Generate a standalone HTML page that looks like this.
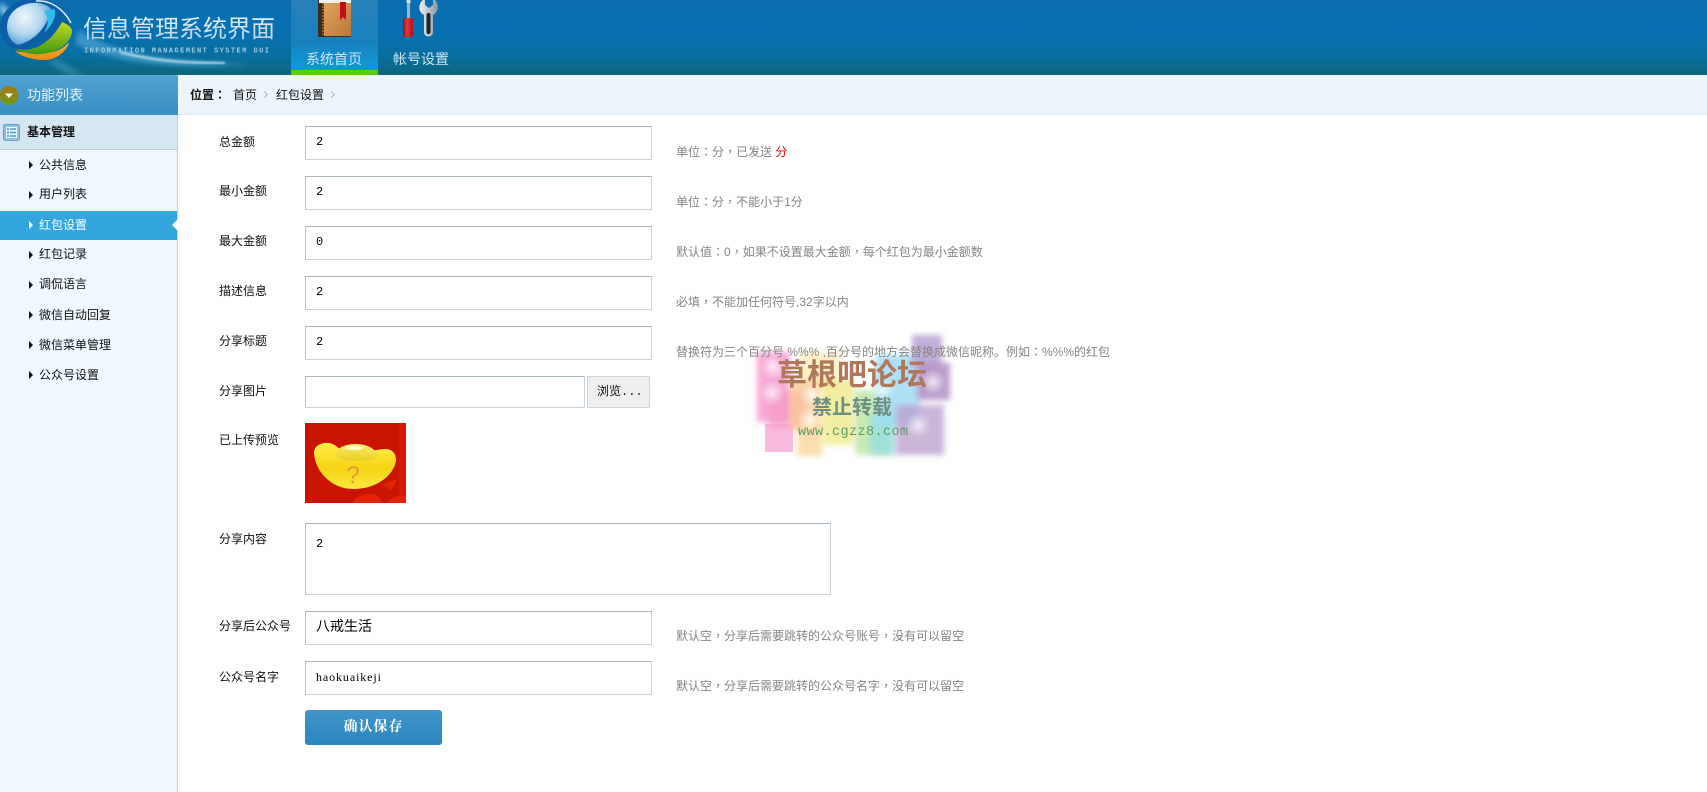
<!DOCTYPE html>
<html lang="zh-CN">
<head>
<meta charset="utf-8">
<title>信息管理系统界面</title>
<style>
*{box-sizing:border-box;margin:0;padding:0}
html,body{width:1707px;height:792px;overflow:hidden;background:#fff}
body{position:relative;font:12px/16px "Liberation Sans","WenQuanYi Zen Hei","Noto Sans CJK SC",sans-serif;color:#111}
.a{position:absolute;white-space:nowrap}
svg{position:absolute;display:block}
i.p{font-style:normal;font-family:"Noto Sans CJK TC",sans-serif}
#hd{left:0;top:0;width:1707px;height:75px;background:linear-gradient(#0a6eb0 0,#0770b2 45%,#086f9f 75%,#0b6678 100%)}
#tab{left:291px;top:0;width:87px;height:75px;background:linear-gradient(#2a80b8,#1681bd 60%,#0f97d4 92%);border-bottom:5px solid #5bce00}
.nav{font-size:14px;line-height:18px;color:#cfe6f2;top:50px}
#side{left:0;top:75px;width:178px;height:717px;background:#f0f9ff;border-right:1px solid #bcd5e3}
#fl{left:0;top:75px;width:178px;height:40px;background:linear-gradient(#4fa2d2,#3a8fc2);border-top:1px solid #62acd8}
#jb{left:0;top:115px;width:177px;height:35px;background:#d3e6f1;border-bottom:1px solid #b7cfdc}
.it{left:39px;line-height:16px}
.ar{width:0;height:0;border-left:4px solid #111;border-top:4px solid transparent;border-bottom:4px solid transparent;left:29px}
#sel{left:0;top:211px;width:177px;height:29px;background:#33a7dd}
#bc{left:178px;top:75px;width:1529px;height:40px;background:#ecf5fb;border-bottom:1px solid #dde8ee}
.chev{width:5px;height:5px;border-top:1.5px solid #a9b8c0;border-right:1.5px solid #a9b8c0;transform:rotate(45deg);top:92px}
.lb{left:219px}
.in{left:305px;width:347px;height:34px;border:1px solid #c8d4dc;border-top-color:#a7b5bf;border-left-color:#b2c0c9;background:#fff;font:12px/31px "Liberation Mono","WenQuanYi Zen Hei",monospace;padding-left:10px;color:#000}
.hn{left:676px;color:#858585}
#btn{left:305px;top:710px;width:137px;height:35px;border-radius:3px;background:linear-gradient(#4095c8,#2986bf);color:#fff;font:bold 14px/35px "Liberation Serif","Noto Serif CJK SC",serif;text-align:center;letter-spacing:1px}
.sq{position:absolute;filter:blur(3px)}
.gl{position:absolute;width:26px;height:26px;border-radius:50%;background:radial-gradient(rgba(255,255,255,.75) 0,rgba(255,255,255,.35) 35%,rgba(255,255,255,0) 72%)}
</style>
</head>
<body>
<div class="a" id="hd"></div>
<!-- header swoosh -->
<svg style="left:0;top:0" width="291" height="75" viewBox="0 0 291 75">
<defs>
<filter id="b3"><feGaussianBlur stdDeviation="2.5"/></filter>
<filter id="b1"><feGaussianBlur stdDeviation="1"/></filter>
<radialGradient id="glo" cx="40%" cy="35%" r="70%"><stop offset="0" stop-color="#eef6fb"/><stop offset=".55" stop-color="#b5d7ee"/><stop offset="1" stop-color="#4a9bd3"/></radialGradient>
<linearGradient id="grn" x1="0" y1="0" x2="0" y2="1"><stop offset="0" stop-color="#c4d81e"/><stop offset="1" stop-color="#3f9a14"/></linearGradient>
<linearGradient id="org" x1="0" y1="0" x2="0" y2="1"><stop offset="0" stop-color="#f4b42a"/><stop offset="1" stop-color="#f08a10"/></linearGradient>
<linearGradient id="ttl" x1="0" y1="0" x2="0" y2="1"><stop offset="0" stop-color="#f6fbfe"/><stop offset="1" stop-color="#a9cfe3"/></linearGradient>
</defs>
<path d="M78 30C120 55 170 62 250 64C190 70 120 66 75 44Z" fill="#5fb4dc" opacity=".55" filter="url(#b3)"/>
<path d="M120 52C150 60 180 63 225 63" stroke="#e6f6fc" stroke-width="2" fill="none" opacity=".85" filter="url(#b1)"/>
<path d="M58 60L85 75H68L48 62Z" fill="#4fa5cc" opacity=".45" filter="url(#b3)"/>
<path d="M0 2L22 20L0 14Z" fill="#bfe3f5" opacity=".65" filter="url(#b3)"/>
<ellipse cx="35" cy="27" rx="35" ry="29" fill="#0c5fa6"/>
<path d="M68 43C60 53 42 56 15 51C22 57 34 60 44 60C56 60 66 52 69 43Z" fill="url(#org)"/>
<path d="M14 48C32 54 50 44 62 22C67 24 72 27 72 31C72 41 60 52 42 54C30 55 20 52 14 48Z" fill="url(#grn)"/>
<path d="M7 27C7 11 22 2 38 3C44 4 49 6 51 9C49 22 38 40 18 45C11 42 7 35 7 27Z" fill="url(#glo)"/>
<path d="M44 11L54 9C58 14 52 26 44 33C49 24 49 18 44 11Z" fill="#2ebce8"/>
<path d="M36 1C50 0 63 8 71 23" stroke="#dbeef8" stroke-width="1.5" fill="none"/>
<text x="83" y="37" font-family="'Noto Sans CJK SC','WenQuanYi Zen Hei',sans-serif" font-size="24" fill="url(#ttl)">信息管理系统界面</text>
<text x="84" y="52.500" font-family="'Liberation Mono',monospace" font-size="7" font-weight="bold" fill="#9cc9e0" textLength="185" lengthAdjust="spacing">INFORMATION MANAGEMENT SYSTEM GUI</text>
</svg>
<div class="a" id="tab"></div>
<!-- book icon -->
<svg style="left:318px;top:0" width="34" height="38" viewBox="0 0 34 38">
<defs><linearGradient id="bk" x1="0" y1="0" x2="1" y2="1"><stop offset="0" stop-color="#e0a45c"/><stop offset="1" stop-color="#b9773a"/></linearGradient></defs>
<rect x="0" y="0" width="33" height="37" rx="1" fill="#3a2c20"/>
<rect x="6" y="2" width="27" height="34" fill="url(#bk)"/>
<rect x="1" y="0" width="32" height="3" fill="#f4f1e8"/>
<path d="M5 3V36" stroke="#d98b2c" stroke-width="1" stroke-dasharray="2 1"/>
<path d="M22 2H28V20L25 17L22 20Z" fill="#c00f1b"/>
</svg>
<!-- tools icon -->
<svg style="left:402px;top:0" width="36" height="38" viewBox="0 0 36 38">
<defs><linearGradient id="rd" x1="0" y1="0" x2="1" y2="0"><stop offset="0" stop-color="#8e1015"/><stop offset=".4" stop-color="#e8383c"/><stop offset="1" stop-color="#a81418"/></linearGradient>
<linearGradient id="st" x1="0" y1="0" x2="1" y2="0"><stop offset="0" stop-color="#eef3f5"/><stop offset="1" stop-color="#8a979e"/></linearGradient></defs>
<rect x="5" y="0" width="3" height="18" fill="#aab4b8"/>
<rect x="4.500" y="0" width="4" height="3" fill="#d8dee0"/>
<rect x="1" y="18" width="10" height="19" rx="2" fill="url(#rd)"/>
<path d="M21 0C16 4 16 12 22 15V32C22 38 31 38 31 32V15C37 12 37 4 33 0L31 0V5L27 8L23 5V0Z" fill="url(#st)"/>
<rect x="24.500" y="13" width="4" height="21" rx="2" fill="#1c2226"/>
</svg>
<div class="a nav" style="left:306px">系统首页</div>
<div class="a nav" style="left:393px">帐号设置</div>

<div class="a" id="side"></div>
<div class="a" id="fl"></div>
<svg style="left:0;top:85px" width="20" height="22" viewBox="0 0 20 22">
<defs><linearGradient id="ol" x1="0" y1="0" x2="0" y2="1"><stop offset="0" stop-color="#a67a12"/><stop offset="1" stop-color="#6f9a1a"/></linearGradient></defs>
<circle cx="9" cy="10.500" r="9.500" fill="url(#ol)"/><path d="M5 8.500H13L9 13Z" fill="#fff"/>
</svg>
<div class="a" style="left:27px;top:86px;font-size:14px;line-height:18px;color:#e4f3fb">功能列表</div>
<div class="a" id="jb"></div>
<svg style="left:3px;top:124px" width="17" height="17" viewBox="0 0 17 17">
<rect x=".5" y=".5" width="16" height="16" rx="2" fill="#8fc0dc" stroke="#62a4cc"/>
<rect x="3" y="3" width="11" height="11" fill="#e8f4fb"/>
<path d="M4 5H6M7 5H13M4 8.500H6M7 8.500H13M4 12H6M7 12H13" stroke="#4a95c4" stroke-width="1.500"/>
</svg>
<div class="a" style="left:27px;top:124px;font-weight:bold">基本管理</div>
<div class="a" id="sel"></div>
<div class="a" style="left:172px;top:219px;width:0;height:0;border-right:6px solid #fff;border-top:6px solid transparent;border-bottom:6px solid transparent"></div>

<div class="a ar" style="top:161px"></div><div class="a it" style="top:157px">公共信息</div>
<div class="a ar" style="top:191px"></div><div class="a it" style="top:186px">用户列表</div>
<div class="a ar" style="top:221px;border-left-color:#fff"></div><div class="a it" style="top:217px;color:#fff">红包设置</div>
<div class="a ar" style="top:251px"></div><div class="a it" style="top:246px">红包记录</div>
<div class="a ar" style="top:281px"></div><div class="a it" style="top:276px">调侃语言</div>
<div class="a ar" style="top:311px"></div><div class="a it" style="top:307px">微信自动回复</div>
<div class="a ar" style="top:341px"></div><div class="a it" style="top:337px">微信菜单管理</div>
<div class="a ar" style="top:371px"></div><div class="a it" style="top:367px">公众号设置</div>

<div class="a" id="bc"></div>
<div class="a" style="left:190px;top:87px;font-weight:bold">位置<i class="p" lang="zh-Hant">：</i></div>
<div class="a" style="left:233px;top:87px">首页</div>
<div class="a chev" style="left:262px"></div>
<div class="a" style="left:276px;top:87px">红包设置</div>
<div class="a chev" style="left:329px"></div>

<!-- watermark -->
<div class="a" style="left:750px;top:330px;width:210px;height:130px">
<div class="sq" style="left:7px;top:22px;width:33px;height:70px;background:#f48dca;opacity:.75"></div>
<div class="sq" style="left:15px;top:94px;width:28px;height:28px;background:#f7a9d8;opacity:.8;filter:none"></div>
<div class="sq" style="left:18px;top:62px;width:38px;height:36px;background:#f59ac5;opacity:.75"></div>
<div class="sq" style="left:50px;top:22px;width:40px;height:36px;background:#fbe9b0;opacity:.7"></div>
<div class="sq" style="left:40px;top:50px;width:32px;height:50px;background:#fac992;opacity:.8"></div>
<div class="sq" style="left:47px;top:94px;width:25px;height:32px;background:#fbd79f;opacity:.85"></div>
<div class="sq" style="left:72px;top:50px;width:32px;height:65px;background:#ede784;opacity:.75"></div>
<div class="sq" style="left:105px;top:60px;width:36px;height:65px;background:#b7e39a;opacity:.75"></div>
<div class="sq" style="left:120px;top:85px;width:26px;height:40px;background:#8fdde8;opacity:.7"></div>
<div class="sq" style="left:125px;top:25px;width:45px;height:70px;background:#9fdcf7;opacity:.85"></div>
<div class="sq" style="left:146px;top:75px;width:48px;height:50px;background:#b99ccc;opacity:.75"></div>
<div class="sq" style="left:162px;top:5px;width:30px;height:34px;background:#bba6d6;opacity:.9"></div>
<div class="sq" style="left:167px;top:33px;width:33px;height:37px;background:#b393c9;opacity:.9"></div>
<div class="gl" style="left:10px;top:24px"></div>
<div class="gl" style="left:9px;top:50px"></div>
<div class="gl" style="left:49px;top:52px"></div>
<div class="gl" style="left:47px;top:77px"></div>
<div class="gl" style="left:119px;top:47px"></div>
<div class="gl" style="left:155px;top:82px"></div>
<div class="gl" style="left:170px;top:39px"></div>
</div>
<div class="a" style="left:777px;top:352px;font:bold 30px/40px 'Noto Sans CJK SC',sans-serif;color:#b0775a">草根吧论坛</div>
<div class="a" style="left:812px;top:392px;font:bold 20px/28px 'Noto Sans CJK SC',sans-serif;color:#6f8f7e">禁止转载</div>
<div class="a" style="left:798px;top:424px;font:13.500px/18px 'Liberation Mono',monospace;color:#619a68;letter-spacing:.4px">www.cgzz8.com</div>

<!-- form -->
<div class="a lb" style="top:134px">总金额</div>
<div class="a in" style="top:126px">2</div>
<div class="a hn" style="top:144px">单位<i class="p" lang="zh-Hant">：</i>分<i class="p" lang="zh-Hant">，</i>已发送 <span style="color:#e8000a">分</span></div>
<div class="a lb" style="top:183px">最小金额</div>
<div class="a in" style="top:176px">2</div>
<div class="a hn" style="top:194px">单位<i class="p" lang="zh-Hant">：</i>分<i class="p" lang="zh-Hant">，</i>不能小于1分</div>
<div class="a lb" style="top:233px">最大金额</div>
<div class="a in" style="top:226px">0</div>
<div class="a hn" style="top:244px">默认值<i class="p" lang="zh-Hant">：</i>0<i class="p" lang="zh-Hant">，</i>如果不设置最大金额<i class="p" lang="zh-Hant">，</i>每个红包为最小金额数</div>
<div class="a lb" style="top:283px">描述信息</div>
<div class="a in" style="top:276px">2</div>
<div class="a hn" style="top:294px">必填<i class="p" lang="zh-Hant">，</i>不能加任何符号,32字以内</div>
<div class="a lb" style="top:333px">分享标题</div>
<div class="a in" style="top:326px">2</div>
<div class="a hn" style="top:344px">替换符为三个百分号 %%% ,百分号的地方会替换成微信昵称。例如<i class="p" lang="zh-Hant">：</i>%%%的红包</div>
<div class="a lb" style="top:383px">分享图片</div>
<div class="a in" style="top:376px;width:280px;height:32px"></div>
<div class="a" style="left:587px;top:376px;width:63px;height:32px;background:#efefef;border:1px solid #c8d4dc;font:12px/31px 'Liberation Mono','WenQuanYi Zen Hei',monospace;padding-left:9px">浏览...</div>
<div class="a lb" style="top:432px">已上传预览</div>
<svg style="left:305px;top:423px" width="101" height="80" viewBox="0 0 101 80">
<defs>
<linearGradient id="au" x1="0" y1="0" x2="0" y2="1"><stop offset="0" stop-color="#fff04a"/><stop offset=".55" stop-color="#f5d412"/><stop offset="1" stop-color="#fbe840"/></linearGradient>
<linearGradient id="au2" x1="0" y1="0" x2="0" y2="1"><stop offset="0" stop-color="#f9ee70"/><stop offset="1" stop-color="#e8cf20"/></linearGradient>
</defs>
<rect width="101" height="80" fill="#c91400"/>
<rect x="94" width="7" height="80" fill="#d61900"/>
<path d="M9 30C9 23 16 19 24 20C30 21 32 24 36 27H64C70 28 74 26 80 26C87 26 91 30 91 37C90 50 74 66 48 66C26 66 10 48 9 30Z" fill="url(#au)"/>
<path d="M31 31C31 25 40 21 51 21C62 21 72 26 72 33C72 36 62 38 51 38C41 38 31 36 31 31Z" fill="url(#au2)"/>
<ellipse cx="49" cy="25" rx="9" ry="2" fill="#fffbd0"/>
<text x="48" y="60" font-family="'Liberation Sans',sans-serif" font-size="24" fill="#e09a3a" text-anchor="middle">?</text>
<path d="M48 80C50 73 60 70 68 71C73 72 76 76 77 80ZM76 62L92 56L89 63L85 68L82 64ZM82 80C84 75 94 71 101 73V80Z" fill="#e22400"/>
</svg>
<div class="a lb" style="top:531px">分享内容</div>
<div class="a in" style="top:523px;width:526px;height:72px;line-height:16px;padding-top:12px;">2</div>
<div class="a lb" style="top:618px">分享后公众号</div>
<div class="a in" style="top:611px;font-size:14px;line-height:33px">八戒生活</div>
<div class="a hn" style="top:628px">默认空<i class="p" lang="zh-Hant">，</i>分享后需要跳转的公众号账号<i class="p" lang="zh-Hant">，</i>没有可以留空</div>
<div class="a lb" style="top:669px">公众号名字</div>
<div class="a in" style="top:661px;font-family:'Liberation Serif',serif;letter-spacing:.9px;line-height:30px">haokuaikeji</div>
<div class="a hn" style="top:678px">默认空<i class="p" lang="zh-Hant">，</i>分享后需要跳转的公众号名字<i class="p" lang="zh-Hant">，</i>没有可以留空</div>
<div class="a" id="btn">确认保存</div>
</body>
</html>
